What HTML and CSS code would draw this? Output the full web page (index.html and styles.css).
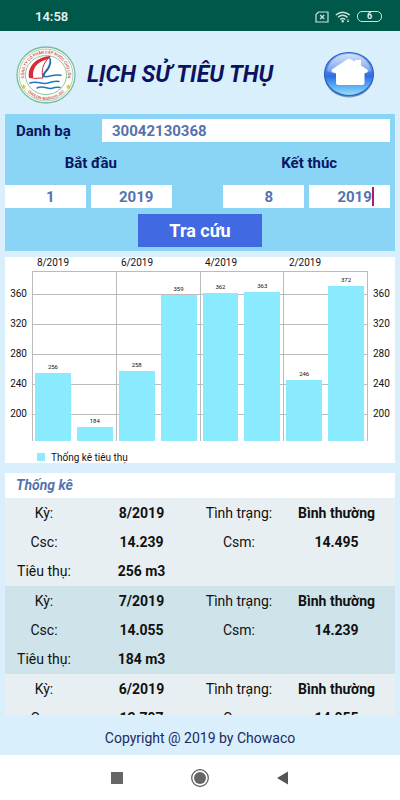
FILE: index.html
```html
<!DOCTYPE html>
<html lang="vi">
<head>
  <meta charset="UTF-8">
  <meta name="viewport" content="width=device-width, initial-scale=1.0">
  <title>Lịch sử tiêu thụ</title>
  <link rel="stylesheet" href="styles.css">
</head>
<body>
  <div class="screen">
    <div class="status-bar">
      <span class="clock">14:58</span>
      <div class="status-icons">
        <svg width="14" height="12" viewBox="0 0 14 12" fill="none" stroke="#c9e3dc">
          <path d="M3.5 1H13v10H1V3.5z" stroke-width="1.2"/>
          <path d="M5.2 4l4 4M9.2 4l-4 4" stroke-width="1.3"/>
        </svg>
        <svg width="16" height="12" viewBox="0 0 16 12" fill="none" stroke="#c9e3dc" stroke-width="1.5">
          <path d="M.8 4Q7.500-1.600 14.800 4M3 6.300Q7.500 2.300 12.500 6.300M5.200 8.500Q7.500 6.500 10.300 8.500"/>
          <circle cx="7.700" cy="10.300" r="1.200" fill="#c9e3dc" stroke="none"/>
          <path d="M13 8v3M11.800 9.800L13 11l1.200-1.200" stroke-width=".8"/>
        </svg>
        <div class="battery">6</div>
      </div>
    </div>

    <header class="header">
      <svg class="logo" viewBox="0 0 60 58">
        <defs>
          <path id="ring-top" d="M10.500 39A21.800 21.800 0 1 1 49.500 39"/>
          <path id="ring-bottom" d="M9 42.500A25 25 0 0 0 51 42.500"/>
        </defs>
        <ellipse cx="30" cy="29" rx="29" ry="28" fill="#fdfdf8" stroke="#7dbd9e" stroke-width="1.300"/>
        <ellipse cx="30" cy="29" rx="27" ry="26" fill="none" stroke="#a3d3b9" stroke-width="1"/>
        <ellipse cx="30" cy="29" rx="20.500" ry="19.500" fill="#fff" stroke="#8cc8a8" stroke-width="1"/>
        <text class="logo-text"><textPath href="#ring-top" startOffset="50%" text-anchor="middle">CÔNG TY CỔ PHẦN CẤP NƯỚC CHỢ LỚN</textPath></text>
        <text class="logo-text"><textPath href="#ring-bottom" startOffset="50%" text-anchor="middle">CHOLON WASUCO JSC</textPath></text>
        <path d="M7.500 38l.8 1.700 1.900.2-1.400 1.300.4 1.900-1.700-1-1.700 1 .4-1.900-1.400-1.300 1.900-.2zM52.500 38l.8 1.700 1.900.2-1.400 1.300.4 1.900-1.700-1-1.700 1 .4-1.900-1.400-1.300 1.900-.2z" fill="#dfbd55"/>
        <path d="M35 10C21 10.500 11 20 13 32l4.500.4C15.500 25 19 16 32 13z" fill="#d92a35"/>
        <path d="M33 11.500c-6 6-8 13-6 20.500l-9.500.4" fill="none" stroke="#d92a35" stroke-width="1"/>
        <path d="M32.500 10c4.500 3 3.500 11-3.500 18-.6 1-.5 1.600.8 2l-2.500.8c-1.500-1.500-.8-3 .8-4.800 5.500-6 6.500-11 4.400-16z" fill="#1c69b5"/>
        <g fill="none" stroke="#2276bd" stroke-width="1.500" stroke-linecap="round">
          <path d="M27 30c5 2.500 8-2 18-.8"/>
          <path d="M14 37c8-3 11 2 18 0 4-1.500 8-2 11-1.500"/>
          <path d="M21 42c7-3 10 1.500 15 .3 3-1 6-1.200 8-.8"/>
        </g>
      </svg>
      <h1>LỊCH SỬ TIÊU THỤ</h1>
      <button class="home" type="button" aria-label="Trang chủ">
        <svg viewBox="0 0 52 47">
          <defs>
            <linearGradient id="orb" x1="0" y1="0" x2="0" y2="1">
              <stop offset="0" stop-color="#8db4f6"/>
              <stop offset=".35" stop-color="#5a8bec"/>
              <stop offset=".55" stop-color="#2f6be0"/>
              <stop offset=".8" stop-color="#5fb2f4"/>
              <stop offset="1" stop-color="#9ee3f8"/>
            </linearGradient>
            <linearGradient id="shine" x1="0" y1="0" x2="0" y2="1">
              <stop offset="0" stop-color="#fff" stop-opacity=".6"/>
              <stop offset="1" stop-color="#fff" stop-opacity=".15"/>
            </linearGradient>
          </defs>
          <ellipse cx="26" cy="25" rx="24.500" ry="21.500" fill="#6f96bd"/>
          <ellipse cx="26" cy="23" rx="24.500" ry="21.500" fill="url(#orb)" stroke="#2f62c4" stroke-width="1.200"/>
          <path d="M4 20C6 9 15 3 26 3s20 6 22 17c-12 6-32 6-44 0z" fill="url(#shine)"/>
          <path d="M24 8.500q2-1.500 4 0l4 2.300V9h6v5.500l6.500 4.200q1.500 3-3 3.300V32q0 2-2 2H15q-2 0-2-2V22q-5-.3-4.500-3.300z" fill="#fff"/>
        </svg>
      </button>
    </header>

    <form class="search">
      <div class="account">
        <label for="account">Danh bạ</label>
        <input id="account" type="text" value="30042130368">
      </div>
      <div class="periods">
        <div class="period">
          <label for="from-month">Bắt đầu</label>
          <div class="fields">
            <input id="from-month" type="text" value="1">
            <input type="text" value="2019" aria-label="Năm bắt đầu">
          </div>
        </div>
        <div class="period">
          <label for="to-month">Kết thúc</label>
          <div class="fields">
            <input id="to-month" type="text" value="8">
            <input type="text" value="2019" aria-label="Năm kết thúc">
            <span class="caret"></span>
          </div>
        </div>
      </div>
      <button class="submit" type="button">Tra cứu</button>
    </form>

    <section class="chart">
      <div class="months">
        <span>8/2019</span>
        <span>6/2019</span>
        <span>4/2019</span>
        <span>2/2019</span>
      </div>
      <div class="chart-body">
        <div class="axis axis-left">
          <span>360</span><span>320</span><span>280</span><span>240</span><span>200</span>
        </div>
        <div class="plot">
          <div class="col"><span>256</span><div class="bar" style="height: 68px"></div></div>
          <div class="col"><span>184</span><div class="bar" style="height: 14px"></div></div>
          <div class="col"><span>258</span><div class="bar" style="height: 70px"></div></div>
          <div class="col"><span>359</span><div class="bar" style="height: 146px"></div></div>
          <div class="col"><span>362</span><div class="bar" style="height: 148px"></div></div>
          <div class="col"><span>363</span><div class="bar" style="height: 149px"></div></div>
          <div class="col"><span>246</span><div class="bar" style="height: 61px"></div></div>
          <div class="col"><span>372</span><div class="bar" style="height: 155px"></div></div>
        </div>
        <div class="axis axis-right">
          <span>360</span><span>320</span><span>280</span><span>240</span><span>200</span>
        </div>
      </div>
      <div class="legend">Thống kê tiêu thụ</div>
    </section>

    <section class="stats">
      <h2>Thống kê</h2>
      <div class="list">
        <table>
          <tbody>
            <tr><th>Kỳ:</th><td>8/2019</td><th>Tình trạng:</th><td>Bình thường</td></tr>
            <tr><th>Csc:</th><td>14.239</td><th>Csm:</th><td>14.495</td></tr>
            <tr><th>Tiêu thụ:</th><td>256 m3</td><td></td><td></td></tr>
          </tbody>
          <tbody>
            <tr><th>Kỳ:</th><td>7/2019</td><th>Tình trạng:</th><td>Bình thường</td></tr>
            <tr><th>Csc:</th><td>14.055</td><th>Csm:</th><td>14.239</td></tr>
            <tr><th>Tiêu thụ:</th><td>184 m3</td><td></td><td></td></tr>
          </tbody>
          <tbody>
            <tr><th>Kỳ:</th><td>6/2019</td><th>Tình trạng:</th><td>Bình thường</td></tr>
            <tr><th>Csc:</th><td>13.797</td><th>Csm:</th><td>14.055</td></tr>
          </tbody>
        </table>
      </div>
    </section>

    <footer class="footer">Copyright @ 2019 by Chowaco</footer>

    <nav class="nav-bar">
      <button type="button" aria-label="Ứng dụng gần đây">
        <svg width="20" height="20" viewBox="0 0 20 20"><path d="M4 4h12v12H4z" fill="#666"/></svg>
      </button>
      <button type="button" aria-label="Màn hình chính">
        <svg width="20" height="20" viewBox="0 0 20 20"><circle cx="10" cy="10" r="8.300" fill="none" stroke="#555" stroke-width="1.200"/><circle cx="10" cy="10" r="6" fill="#666"/></svg>
      </button>
      <button type="button" aria-label="Quay lại">
        <svg width="20" height="20" viewBox="0 0 20 20"><path d="M4 10l11-6.500v13z" fill="#555"/></svg>
      </button>
    </nav>
  </div>
</body>
</html>
```
FILE: styles.css
```css
* {
  box-sizing: border-box;
}
body {
  margin: 0;
  font-family: Roboto, "Noto Sans", sans-serif;
  font-size: 14px;
  color: #111;
  background-color: #d9effc;
}
button {
  padding: 0;
  border: none;
  background: none;
  font-family: inherit;
}
svg {
  display: block;
}
.screen {
  display: flex;
  flex-direction: column;
  height: 100vh;
}

/* status bar */
.status-bar {
  display: flex;
  align-items: center;
  justify-content: space-between;
  height: 31px;
  padding: 2px 18px 0 35px;
  background-color: #00584a;
  color: #e3f1ee;
}
.clock {
  font-size: 13px;
  font-weight: 600;
}
.status-icons {
  display: flex;
  align-items: center;
  gap: 6px;
}
.battery {
  width: 25px;
  height: 11px;
  border: 1px solid #c9e3dc;
  border-radius: 5px;
  font-size: 9px;
  font-weight: bold;
  line-height: 9px;
  text-align: center;
}

/* header */
.header {
  display: flex;
  align-items: center;
  height: 83px;
  padding: 4px 25px 0 16px;
}
.logo {
  width: 60px;
  height: 58px;
}
.logo-text {
  font-size: 4px;
  font-weight: bold;
  fill: #d0605c;
}
h1 {
  flex: 1;
  margin: 0 0 0 11px;
  font-size: 23px;
  font-style: italic;
  font-weight: bold;
  color: #0c1260;
  white-space: nowrap;
}
.home {
  width: 52px;
  cursor: pointer;
}

/* search form */
.search {
  display: flex;
  flex-direction: column;
  height: 137px;
  margin: 0 5px;
  padding-top: 5px;
  background-color: #8ad4f6;
}
.search label {
  font-size: 15px;
  font-weight: bold;
  color: #0b1560;
}
.search input {
  min-width: 0;
  height: 23px;
  padding: 0 0 0 10px;
  border: none;
  border-radius: 0;
  background-color: #fff;
  font-family: inherit;
  font-size: 15px;
  font-weight: bold;
  color: #5672ae;
}
.account {
  display: flex;
  align-items: center;
  padding-right: 5px;
}
.account label {
  width: 97px;
  padding-left: 11px;
}
.account input {
  flex: 1;
}
.periods {
  display: flex;
  justify-content: space-between;
}
.period {
  width: 44%;
}
.period label {
  display: block;
  height: 43px;
  line-height: 43px;
  text-align: center;
}
.fields {
  position: relative;
  display: flex;
  gap: 5px;
  padding-right: 5px;
}
.fields input {
  flex: 1;
  text-align: center;
}
.caret {
  position: absolute;
  top: 2px;
  right: 21px;
  width: 2px;
  height: 19px;
  background-color: #b3186c;
}
.submit {
  align-self: center;
  width: 124px;
  height: 33px;
  margin-top: 6px;
  background-color: #4169e1;
  color: #fff;
  font-size: 18px;
  font-weight: bold;
  cursor: pointer;
}

/* chart */
.chart {
  margin: 6px 5px 0;
  height: 206px;
  background-color: #fff;
  font-size: 10px;
}
.months {
  display: grid;
  grid-template-columns: repeat(4, 1fr);
  height: 14px;
  padding: 0 27px;
  line-height: 11px;
}
.months span {
  width: 50%;
  text-align: center;
}
.chart-body {
  display: flex;
}
.axis {
  display: flex;
  flex-direction: column;
  width: 27px;
  padding-top: 8px;
  line-height: 30px;
}
.axis-left {
  padding-right: 5px;
  text-align: right;
}
.axis-right {
  padding-left: 5px;
}
.plot {
  flex: 1;
  display: flex;
  height: 170px;
  border-top: 1px solid #bbb;
  border-right: 1px solid #bbb;
  background: repeating-linear-gradient(transparent 0 22px, #bbb 22px 23px, transparent 23px 30px);
}
.col {
  flex: 1;
  display: flex;
  flex-direction: column;
  justify-content: flex-end;
  padding: 0 3px;
}
.col:nth-child(odd) {
  padding-left: 2px;
  border-left: 1px solid #bbb;
}
.col span {
  font-size: 6px;
  line-height: 13px;
  text-align: center;
}
.bar {
  background-color: #8aeafe;
}
.legend {
  display: flex;
  align-items: center;
  gap: 6px;
  height: 22px;
  padding: 10px 0 0 32px;
}
.legend::before {
  content: "";
  width: 8px;
  height: 8px;
  background-color: #8aeafe;
}

/* statistics list */
.stats {
  flex: 1;
  display: flex;
  flex-direction: column;
  min-height: 0;
  margin: 10px 5px 0;
}
h2 {
  margin: 0;
  padding-left: 11px;
  background-color: #fff;
  font-size: 14px;
  font-style: italic;
  line-height: 25px;
  color: #5672ae;
}
.list {
  flex: 1;
  min-height: 0;
  overflow: hidden;
}
table {
  width: 100%;
  table-layout: fixed;
  border-collapse: collapse;
}
tbody {
  background-color: #e8eff2;
}
tbody:nth-child(even) {
  background-color: #cfe3ea;
}
th,
td {
  width: 30%;
  height: 29px;
  padding: 0;
  text-align: center;
  white-space: nowrap;
}
th {
  width: 20%;
  font-weight: normal;
}
td {
  font-weight: bold;
}
tr:last-child > * {
  height: 30px;
  padding-bottom: 1px;
}

.footer {
  height: 40px;
  line-height: 46px;
  text-align: center;
  color: #1c2a5c;
}

/* system navigation */
.nav-bar {
  display: flex;
  align-items: center;
  justify-content: center;
  gap: 63px;
  height: 45px;
  background-color: #fff;
}
```
